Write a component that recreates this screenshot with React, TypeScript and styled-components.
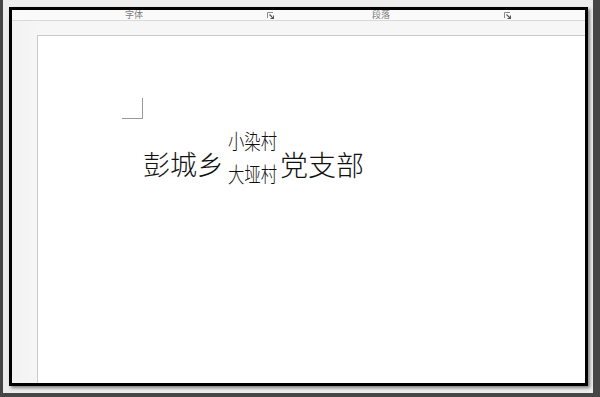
import React from "react";
import styled, { createGlobalStyle } from "styled-components";

const GlobalStyle = createGlobalStyle`
  html, body {
    margin: 0;
    padding: 0;
    background: #464646;
  }
  #root {
    width: 600px;
    height: 397px;
  }
`;

const Screen = styled.div`
  width: 600px;
  height: 397px;
  box-sizing: border-box;
  padding: 0 7px 4px 3px;
  background: #464646;
  display: flex;
`;

const Shell = styled.div`
  flex: 1;
  display: flex;
  background: #ededed;
  padding: 7px 5px 7px 6px;
`;

const Window = styled.div`
  flex: 1;
  display: flex;
  flex-direction: column;
  border: 3px solid #000;
  box-shadow: 2px 2px 3px rgba(0, 0, 0, 0.45);
  background: #f4f4f4;
  overflow: hidden;
`;

const Ribbon = styled.div`
  height: 10px;
  flex: none;
  display: flex;
  background: #fafafa;
  border-bottom: 1px solid #d9d9d9;
`;

const Group = styled.div<{ w: number; offset: number }>`
  width: ${({ w }) => w}px;
  display: flex;
  align-items: center;
  padding-left: ${({ offset }) => offset}px;
  padding-right: 4px;
  box-sizing: border-box;
`;

const GroupLabel = styled.span`
  font-family: "Noto Sans CJK SC", sans-serif;
  font-size: 9px;
  line-height: 10px;
  color: #7a7a7a;
`;

const Launcher = styled.svg`
  margin-left: auto;
  width: 7px;
  height: 7px;
`;

const Canvas = styled.div`
  flex: 1;
  display: flex;
  padding: 14px 0 0 25px;
  background: linear-gradient(90deg, #f2f2f2 0px, #f6f6f6 26px);
  min-height: 0;
`;

const Page = styled.div`
  flex: 1;
  background: #fff;
  border-left: 1px solid #c9c9c9;
  border-top: 1px solid #c9c9c9;
  padding: 62px 0 0 84px;
  margin-right: -4px;
`;

const Corner = styled.div`
  width: 20px;
  height: 20px;
  border-right: 1px solid #9a9a9a;
  border-bottom: 1px solid #9a9a9a;
`;

const Line = styled.div`
  display: flex;
  align-items: center;
  margin: 5px 0 0 21px;
  font-family: "Noto Sans CJK SC", "Noto Sans CJK JP", sans-serif;
  color: #111;
`;

const Big = styled.span<{ size: number }>`
  font-size: ${({ size }) => size}px;
  line-height: 36px;
  font-weight: 300;
`;

const Combined = styled.span`
  display: flex;
  flex-direction: column;
  align-items: center;
  width: 56px;
  padding-bottom: 14px;
`;

const CombinedRow = styled.span`
  font-size: 21px;
  line-height: 33px;
  font-weight: 300;
  transform: scaleX(0.78);
  white-space: nowrap;
`;

const LauncherIcon = () => (
  <Launcher viewBox="0 0 7 7">
    <path d="M0.5 6 V0.5 H6" fill="none" stroke="#8a8a8a" strokeWidth="1" />
    <path d="M2.5 2.5 L6.5 6.5 M6.5 3.5 V6.5 H3.5" fill="none" stroke="#555" strokeWidth="1.2" />
  </Launcher>
);

export default function App() {
  return (
    <>
      <GlobalStyle />
      <Screen>
        <Shell>
          <Window>
            <Ribbon>
              <Group w={266} offset={113}>
                <GroupLabel>字体</GroupLabel>
                <LauncherIcon />
              </Group>
              <Group w={237} offset={94}>
                <GroupLabel>段落</GroupLabel>
                <LauncherIcon />
              </Group>
            </Ribbon>
            <Canvas>
              <Page>
                <Corner />
                <Line>
                  <Big size={27}>彭城乡</Big>
                  <Combined>
                    <CombinedRow>小染村</CombinedRow>
                    <CombinedRow>大垭村</CombinedRow>
                  </Combined>
                  <Big size={28}>党支部</Big>
                </Line>
              </Page>
            </Canvas>
          </Window>
        </Shell>
      </Screen>
    </>
  );
}
